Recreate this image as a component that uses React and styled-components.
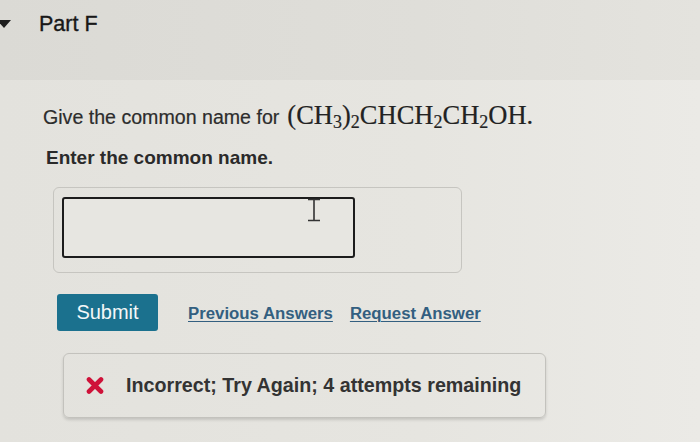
import React from 'react';
import styled, { createGlobalStyle } from 'styled-components';

const GlobalStyle = createGlobalStyle`
    html, body {
        margin: 0;
        padding: 0;
        background: #e5e4df;
    }
    body {
        font-family: "Liberation Sans", Arial, sans-serif;
        color: #2b2b2b;
    }
`;

const Page = styled.div`
    width: 700px;
    height: 442px;
    overflow: hidden;
    background: linear-gradient(90deg, #e3e2dd 0%, #e6e5e0 60%, #ebeae6 100%);
`;

const PartHeader = styled.div`
    height: 80px;
    display: flex;
    align-items: flex-start;
    padding: 11px 0 0 0;
    box-sizing: border-box;
    background: linear-gradient(90deg, #dbdad5 0%, #dfded9 60%, #e4e3de 100%);
`;

const Caret = styled.span`
    width: 0;
    height: 0;
    margin: 9px 28px 0 -3px;
    border-left: 7px solid transparent;
    border-right: 7px solid transparent;
    border-top: 8px solid #1e1e1e;
`;

const PartTitle = styled.h2`
    margin: 0;
    font-size: 21.5px;
    font-weight: normal;
    line-height: 26px;
    color: #181818;
    -webkit-text-stroke: 0.35px #181818;
`;

const Content = styled.div`
    padding: 21px 0 0 43px;
`;

const Question = styled.p`
    margin: 0;
    font-size: 19.6px;
    line-height: 28px;
    color: #2c2c2c;
    -webkit-text-stroke: 0.2px #2c2c2c;
    display: flex;
    align-items: baseline;
    gap: 8px;
`;

const Formula = styled.span`
    font-family: "Liberation Serif", "Times New Roman", serif;
    font-size: 26.5px;
    color: #222;
    sub {
        font-size: 0.68em;
        vertical-align: -0.22em;
        line-height: 0;
    }
`;

const Prompt = styled.p`
    margin: 15px 0 0 3px;
    font-size: 19px;
    font-weight: bold;
    line-height: 24px;
    color: #2a2a2a;
`;

const AnswerPanel = styled.div`
    margin: 17px 0 0 10px;
    width: 409px;
    height: 86px;
    box-sizing: border-box;
    border: 1px solid #c6c5c0;
    border-radius: 6px;
    padding: 9px 0 0 8px;
`;

const InputWrap = styled.div`
    position: relative;
    width: 293px;
    height: 61px;
`;

const AnswerInput = styled.input`
    width: 100%;
    height: 100%;
    box-sizing: border-box;
    border: 2.5px solid #1c1c1c;
    border-radius: 3px;
    background: #e7e6e1;
    outline: none;
`;

const Beam = styled.svg`
    position: absolute;
    left: 245px;
    top: 1px;
`;

const Actions = styled.div`
    margin: 21px 0 0 14px;
    display: flex;
    align-items: center;
`;

const SubmitButton = styled.button`
    width: 101px;
    height: 37px;
    border: none;
    border-radius: 3px;
    background: #1b718e;
    color: #f4f7f8;
    font-family: inherit;
    font-size: 20px;
    padding: 0;
    margin-right: 30px;
`;

const LinkButton = styled.a`
    font-size: 16.8px;
    font-weight: bold;
    color: #335f80;
    text-decoration: underline;
    text-decoration-thickness: 1px;
    text-underline-offset: 2px;
    margin-right: 17px;
    margin-top: 3px;
    cursor: pointer;
`;

const Feedback = styled.div`
    margin: 22px 0 0 20px;
    width: 483px;
    height: 65px;
    box-sizing: border-box;
    border: 1px solid #c3c2bd;
    border-radius: 6px;
    box-shadow: 0 2px 3px rgba(0, 0, 0, 0.14);
    display: flex;
    align-items: center;
    padding: 0 0 0 22px;
    gap: 22px;
`;

const FeedbackText = styled.span`
    font-size: 19.7px;
    font-weight: bold;
    color: #333;
`;

const WrongMark = () => (
    <svg width="18" height="17" viewBox="0 0 18 17">
        <path d="M3 2.5 L15 14.5 M15 2.5 L3 14.5" stroke="#cf1239" strokeWidth="4.6" strokeLinecap="round" />
    </svg>
);

const App = () => (
    <>
        <GlobalStyle />
        <Page>
            <PartHeader>
                <Caret />
                <PartTitle>Part F</PartTitle>
            </PartHeader>
            <Content>
                <Question>
                    Give the common name for
                    <Formula>
                        (CH<sub>3</sub>)<sub>2</sub>CHCH<sub>2</sub>CH<sub>2</sub>OH.
                    </Formula>
                </Question>
                <Prompt>Enter the common name.</Prompt>
                <AnswerPanel>
                    <InputWrap>
                        <AnswerInput type="text" aria-label="common name" />
                        <Beam width="14" height="24" viewBox="0 0 14 24">
                            <path d="M1 1.5 H13 M7 1.5 V22.5 M1 22.5 H13" stroke="#333" strokeWidth="1.6" fill="none" />
                        </Beam>
                    </InputWrap>
                </AnswerPanel>
                <Actions>
                    <SubmitButton>Submit</SubmitButton>
                    <LinkButton>Previous Answers</LinkButton>
                    <LinkButton>Request Answer</LinkButton>
                </Actions>
                <Feedback>
                    <WrongMark />
                    <FeedbackText>Incorrect; Try Again; 4 attempts remaining</FeedbackText>
                </Feedback>
            </Content>
        </Page>
    </>
);

export default App;
